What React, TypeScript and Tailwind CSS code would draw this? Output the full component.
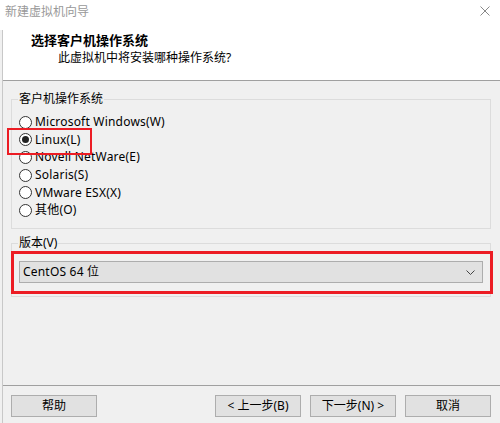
import type { ReactNode } from 'react'

const osOptions = [
  { label: 'Microsoft Windows(W)', checked: false },
  { label: 'Linux(L)', checked: true },
  { label: 'Novell NetWare(E)', checked: false },
  { label: 'Solaris(S)', checked: false },
  { label: 'VMware ESX(X)', checked: false },
  { label: '其他(O)', checked: false },
]

function Radio({ label, checked }: { label: string; checked: boolean }) {
  return (
    <div className="flex h-[17.6px] items-center">
      <span className="flex h-[13px] w-[13px] items-center justify-center rounded-full border border-[#333] bg-white">
        {checked ? <span className="h-[7px] w-[7px] rounded-full bg-[#222]" /> : null}
      </span>
      <span className="ml-[3px] text-[12px] leading-[16px] tracking-[0.2px] text-black">{label}</span>
    </div>
  )
}

function GroupBox({ title, className, children }: { title: string; className: string; children: ReactNode }) {
  return (
    <div className={`relative ml-[8px] w-[480px] border border-[#dcdcdc] ${className}`}>
      <span className="absolute left-[6px] top-[-9px] bg-[#f0f0f0] px-[1px] text-[12px] leading-[16px] text-black">
        {title}
      </span>
      {children}
    </div>
  )
}

function Button({ children }: { children: ReactNode }) {
  return (
    <button className="flex h-[22px] w-[86px] items-center justify-center border border-[#adadad] bg-[#e1e1e1] text-[12px] leading-[16px] text-black">
      {children}
    </button>
  )
}

export default function App() {
  return (
    <div className="relative flex h-[423px] w-[500px] flex-col overflow-hidden bg-[#f0f0f0] font-['Noto_Sans','Noto_Sans_CJK_SC',sans-serif]">
      <div className="flex h-[30px] shrink-0 items-start justify-between bg-white pl-[5px] pr-[10px] pt-[4px]">
        <span className="text-[12px] leading-[16px] text-[#999]">新建虚拟机向导</span>
        <svg width="10" height="10" viewBox="0 0 10 10" className="mt-[2px]">
          <path d="M0.5 0.5 L9.5 9.5 M9.5 0.5 L0.5 9.5" stroke="#888" strokeWidth="1" />
        </svg>
      </div>

      <div className="ml-[2px] flex flex-1 flex-col border-l border-[#c8c8c8]">
        <div className="h-[51px] shrink-0 border-b border-[#a0a0a0] bg-white pt-[2px]">
          <div className="pl-[28px] text-[13px] font-bold leading-[16px] text-black">选择客户机操作系统</div>
          <div className="mt-[2px] pl-[55px] text-[12px] leading-[16px] text-black">此虚拟机中将安装哪种操作系统?</div>
        </div>

        <div className="flex flex-1 flex-col">
          <GroupBox title="客户机操作系统" className="mt-[18px] h-[130px]">
            <div className="pl-[7px] pt-[13.5px]">
              {osOptions.map((option) => (
                <Radio key={option.label} label={option.label} checked={option.checked} />
              ))}
            </div>
          </GroupBox>

          <GroupBox title="版本(V)" className="mt-[14px] h-[54px]">
            <div className="ml-[7px] mt-[17px] flex h-[22px] w-[464px] items-center justify-between border border-[#adadad] bg-[#e1e1e1] pl-[3px] pr-[7px]">
              <span className="text-[12px] leading-[16px] tracking-[0.2px] text-black">CentOS 64 位</span>
              <svg width="9" height="5" viewBox="0 0 9 5">
                <path d="M0.5 0.5 L4.5 4.5 L8.5 0.5" fill="none" stroke="#444" strokeWidth="1" />
              </svg>
            </div>
          </GroupBox>

          <div className="flex-1" />

          <div className="flex h-[38px] shrink-0 items-start justify-between border-t border-[#a0a0a0] pl-[8px] pr-[9px] pt-[9px]">
            <Button>帮助</Button>
            <div className="flex gap-[9px]">
              <Button>&lt; 上一步(B)</Button>
              <Button>下一步(N) &gt;</Button>
              <Button>取消</Button>
            </div>
          </div>
        </div>
      </div>

      <div className="pointer-events-none absolute left-[7px] top-[128px] h-[27px] w-[85px] border-2 border-[#ec1c24]" />
      <div className="pointer-events-none absolute left-[11px] top-[251px] h-[43px] w-[482px] border-[3px] border-[#ec1c24]" />
    </div>
  )
}
